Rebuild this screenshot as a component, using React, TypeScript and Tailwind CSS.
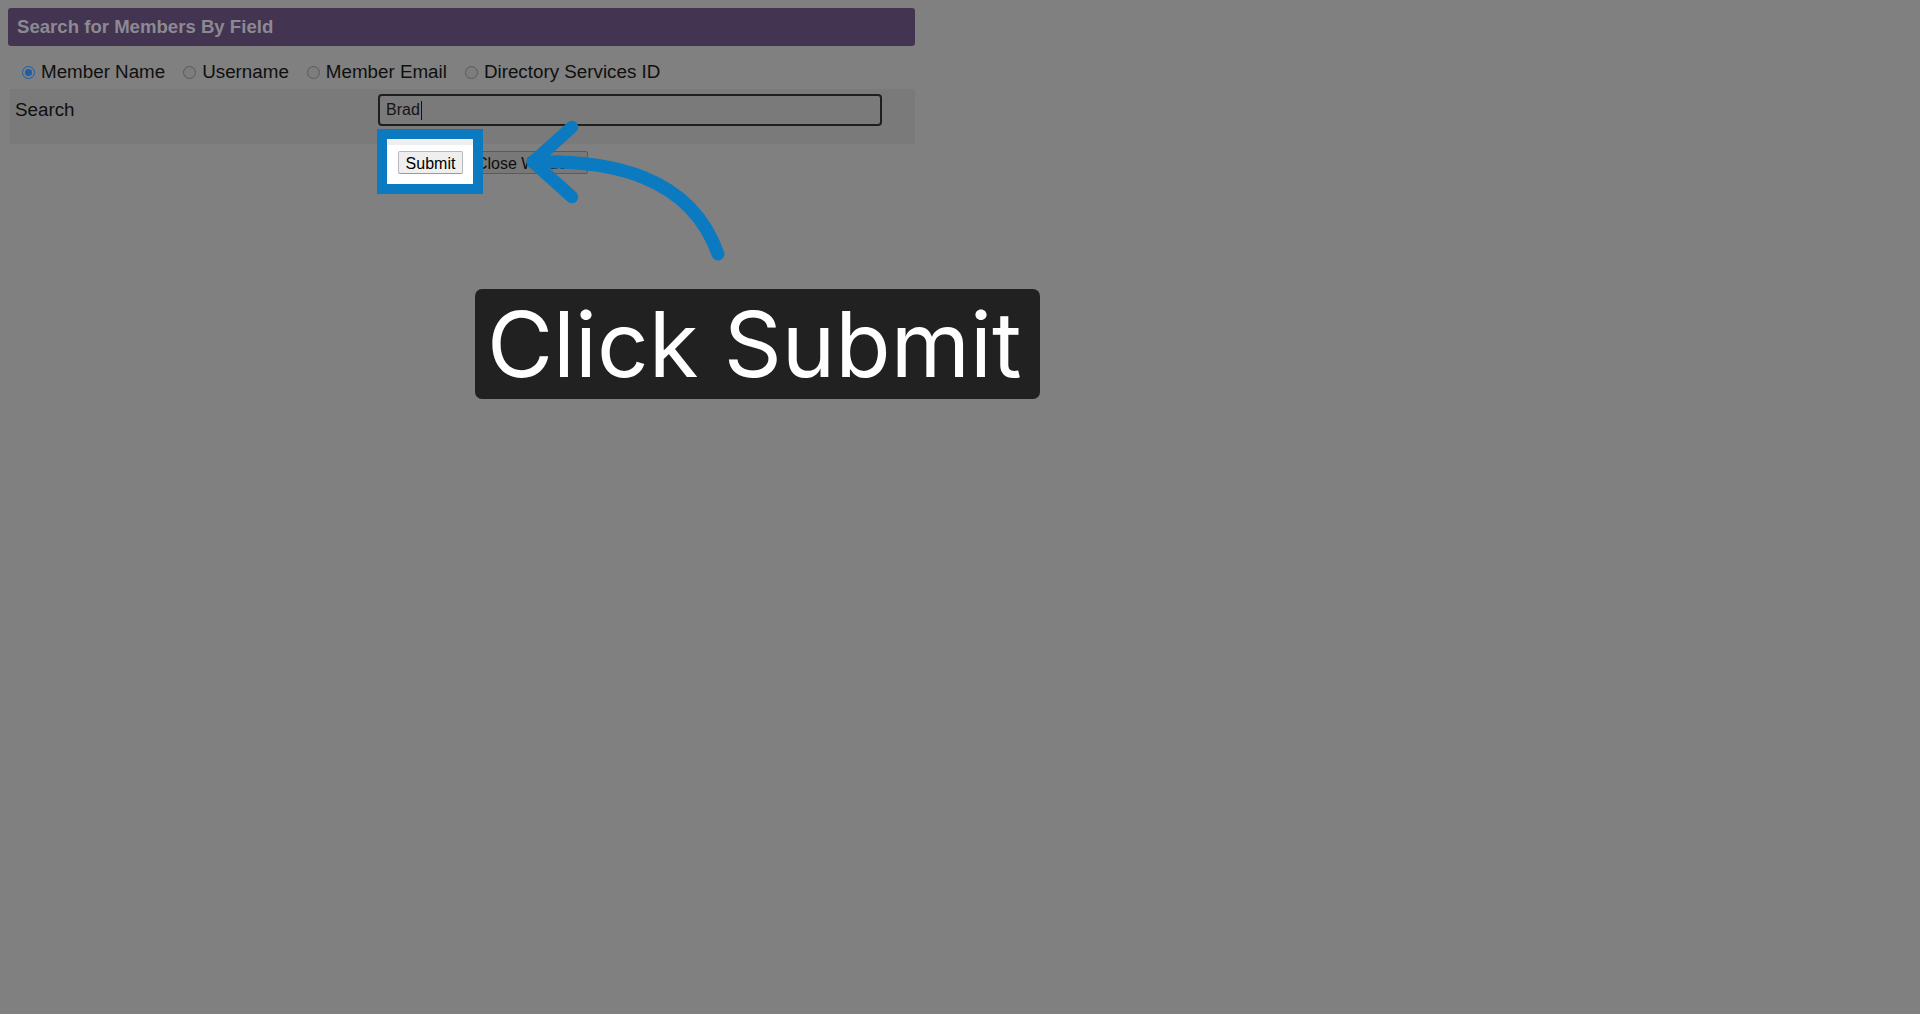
import React from 'react';

// Annotated screenshot: dimmed member search form + "Click Submit" callout

type RadioProps = { label: string; checked?: boolean; first?: boolean };

function Radio({ label, checked = false, first = false }: RadioProps) {
  return (
    <label className={`flex items-center ${first ? '' : 'ml-[18px]'}`}>
      {checked ? (
        <span className="flex h-[13px] w-[13px] items-center justify-center rounded-full border border-[#1d5ea5] bg-[#7f7f7f]">
          <span className="h-[7px] w-[7px] rounded-full bg-[#1d5ea5]" />
        </span>
      ) : (
        <span className="h-[13px] w-[13px] rounded-full border border-[#5a5a5a] bg-[#7d7d7d]" />
      )}
      <span className="ml-[6px] text-[18.8px] text-[#0f0f0f]">{label}</span>
    </label>
  );
}

export default function App() {
  return (
    <div className="relative h-[1014px] w-full overflow-hidden bg-[#808080] px-[8px] pt-[8px] font-['Liberation_Sans',Arial,sans-serif]">
      {/* header bar */}
      <div className="flex h-[38px] w-[907px] items-center rounded-[3px] bg-[#433551] px-[9px] text-[18.6px] font-bold text-[#8d8992]">
        Search for Members By Field
      </div>

      {/* search field options */}
      <div className="mt-[14px] mb-[5px] flex h-[24px] items-center pl-[14px]">
        <Radio label="Member Name" checked first />
        <Radio label="Username" />
        <Radio label="Member Email" />
        <Radio label="Directory Services ID" />
      </div>

      {/* search row */}
      <div className="ml-[2px] flex w-[905px] items-start bg-[#7a7a7a] pt-[5px] pb-[18px]">
        <div className="flex h-[32px] w-[368px] items-center pl-[5px] text-[18.8px] text-[#0f0f0f]">Search</div>
        <div className="flex h-[32px] w-[504px] items-center rounded-[4px] border-2 border-[#1e1e1e] pl-[6px] text-[16px] text-[#141414]">
          Brad
          <span className="ml-px h-[19px] w-px bg-[#111]" />
        </div>
      </div>

      {/* buttons */}
      <div className="mt-[7px] ml-[390px] flex">
        <button className="h-[23px] w-[65px] rounded-[2px] border border-[#5b5b5b] bg-[#787878] text-[16px] text-[#0d0d0d]">
          Submit
        </button>
        <button className="ml-[6px] h-[23px] w-[119px] rounded-[2px] border border-[#5b5b5b] bg-[#787878] pl-[6px] text-left text-[16px] text-[#0d0d0d]">
          Close Window
        </button>
      </div>

      {/* highlight around Submit */}
      <div className="absolute left-[377px] top-[129px] h-[65px] w-[106px] border-[10px] border-[#0b7ac0] bg-white">
        <div className="h-[6px] bg-[#efefef]" />
        <button className="ml-[11px] mt-[6px] h-[23px] w-[65px] rounded-[2px] border border-[#b9b9b9] border-b-[#9a9a9a] bg-[#efefef] text-[16px] text-black">
          Submit
        </button>
      </div>

      {/* arrow */}
      <svg
        className="absolute left-[515px] top-[110px] h-[160px] w-[220px]"
        viewBox="515 110 220 160"
        fill="none"
      >
        <path
          d="M572 127 L533 162 L572 197"
          stroke="#0b7ac0"
          strokeWidth="12.5"
          strokeLinecap="round"
          strokeLinejoin="round"
        />
        <path
          d="M533 162 C610 160 690 175 718 254"
          stroke="#0b7ac0"
          strokeWidth="13"
          strokeLinecap="round"
        />
      </svg>

      {/* callout */}
      <div className="absolute left-[475px] top-[289px] h-[110px] rounded-[7px] bg-[#212121] pl-[12px] pr-[18px] font-['Inter',sans-serif] text-[90.5px] leading-[110px] text-white">
        Click Submit
      </div>
    </div>
  );
}
